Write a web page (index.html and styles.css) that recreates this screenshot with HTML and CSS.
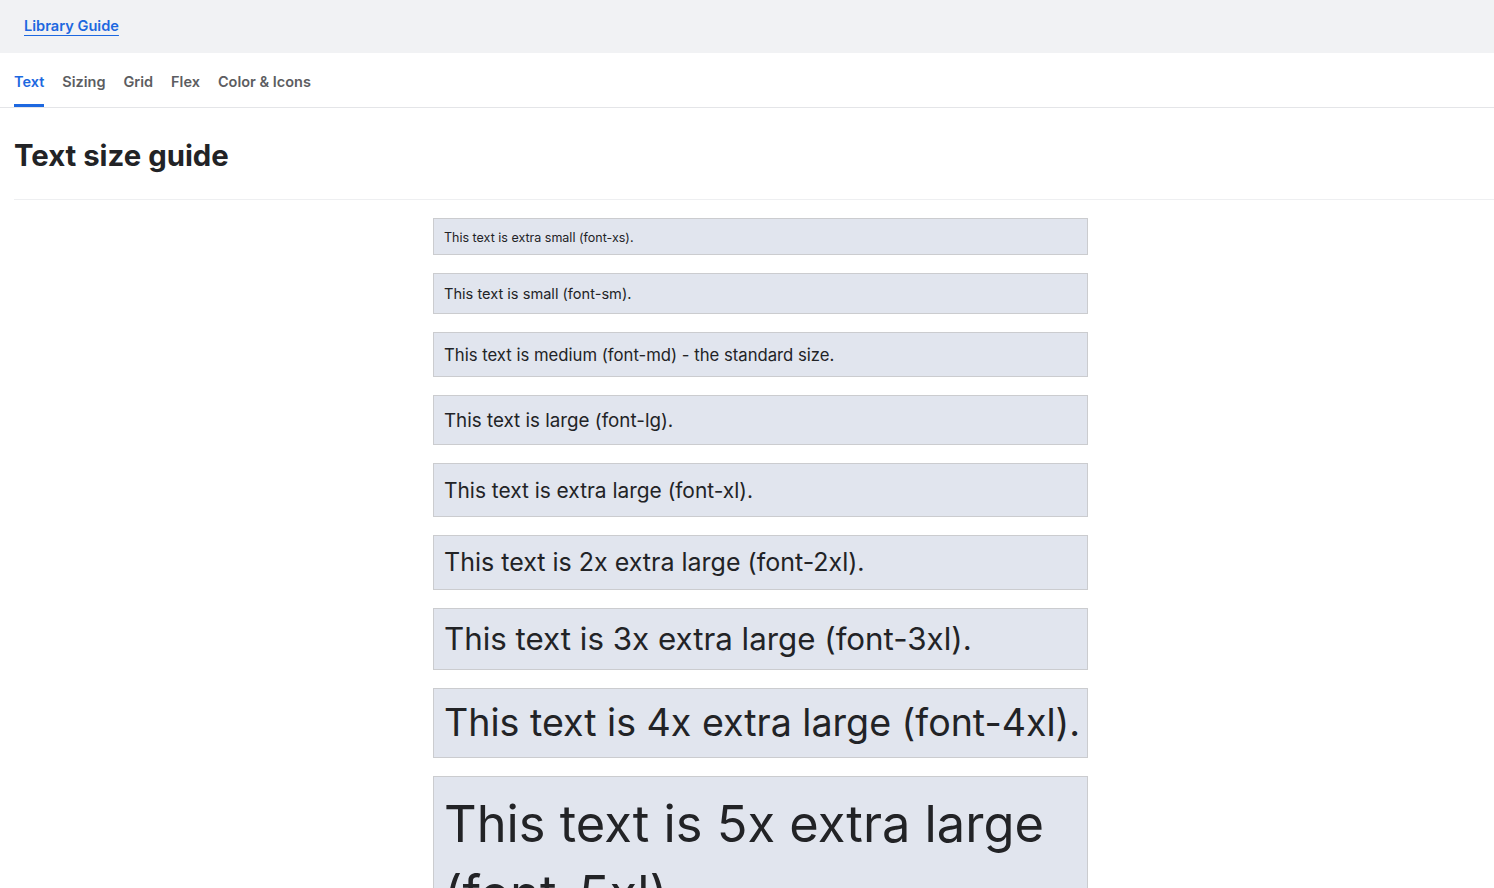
FILE: index.html
```html
<!DOCTYPE html>
<html lang="en">
<head>
<meta charset="utf-8">
<title>Library Guide</title>
<link rel="stylesheet" href="styles.css">
</head>
<body>
<header class="topbar">
  <a class="brand" href="#">Library Guide</a>
</header>
<nav class="tabs">
  <a class="tab active" href="#">Text</a>
  <a class="tab" href="#">Sizing</a>
  <a class="tab" href="#">Grid</a>
  <a class="tab" href="#">Flex</a>
  <a class="tab" href="#">Color &amp; Icons</a>
</nav>
<main class="page">
  <h1 class="title">Text size guide</h1>
  <section class="samples">
    <div class="sample font-xs">This text is extra small (font-xs).</div>
    <div class="sample font-sm">This text is small (font-sm).</div>
    <div class="sample font-md">This text is medium (font-md) - the standard size.</div>
    <div class="sample font-lg">This text is large (font-lg).</div>
    <div class="sample font-xl">This text is extra large (font-xl).</div>
    <div class="sample font-2xl">This text is 2x extra large (font-2xl).</div>
    <div class="sample font-3xl">This text is 3x extra large (font-3xl).</div>
    <div class="sample font-4xl">This text is 4x extra large (font-4xl).</div>
    <div class="sample font-5xl">This text is 5x extra large (font-5xl).</div>
  </section>
</main>
</body>
</html>
```
FILE: styles.css
```css
* { box-sizing: border-box; }
html, body { margin: 0; padding: 0; }
body {
  font-family: Inter, "Liberation Sans", sans-serif;
  color: #222326;
  background: #fff;
}
.topbar {
  height: 53px;
  background: #f1f2f4;
  display: flex;
  align-items: center;
  padding-left: 24px;
}
.brand {
  color: #1d68e0;
  font-weight: 600;
  font-size: 14.6px;
  text-decoration: underline;
  text-underline-offset: 4px;
  padding-bottom: 1px;
}
.tabs {
  display: flex;
  gap: 18px;
  padding: 0 14px;
  height: 55px;
  border-bottom: 1px solid #e4e5e8;
}
.tab {
  display: flex;
  align-items: center;
  font-size: 14.5px;
  font-weight: 600;
  color: #5c5d61;
  text-decoration: none;
  border-bottom: 3px solid transparent;
  padding-top: 5px;
}
.tab.active {
  color: #1d68e0;
  border-bottom-color: #1d68e0;
}
.page {
  padding: 0 0 0 14px;
}
.title {
  margin: 0;
  font-size: 29.3px;
  font-weight: 700;
  line-height: 36px;
  padding: 30px 0 25px 0;
  border-bottom: 1px solid #eeeff1;
}
.samples {
  padding: 18px 0 0 13px;
  display: flex;
  flex-direction: column;
  gap: 18px;
}
.sample {
  width: 655px;
  margin: 0 auto;
  background: #e1e5ee;
  border: 1px solid #cbcccf;
  padding: 11px 4px 9px 10px;
  color: #222326;
}
.font-xs { font-size: 12.5px; line-height: 15px; }
.font-sm { font-size: 14.6px; line-height: 19px; }
.font-md { font-size: 16.7px; line-height: 23px; }
.font-lg { font-size: 18.8px; line-height: 28px; }
.font-xl { font-size: 20.9px; line-height: 32px; }
.font-2xl { font-size: 25px; line-height: 33px; padding-top: 10px; padding-bottom: 10px; }
.font-3xl { font-size: 31.3px; line-height: 40px; padding-top: 10px; padding-bottom: 10px; }
.font-4xl { font-size: 37.6px; line-height: 48px; padding-top: 10px; padding-bottom: 10px; }
.font-5xl { font-size: 50.6px; line-height: 70px; padding-top: 12px; }
```
